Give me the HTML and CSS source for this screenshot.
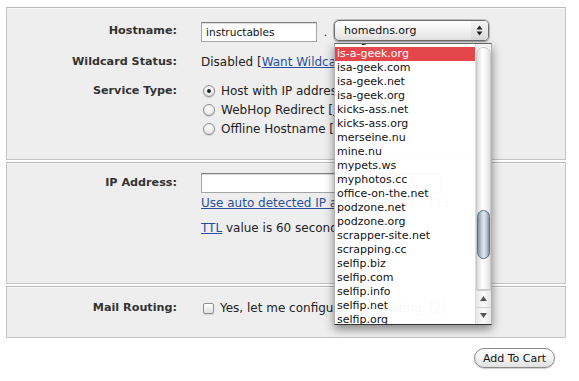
FILE: index.html
```html
<!DOCTYPE html>
<html>
<head>
<meta charset="utf-8">
<link rel="stylesheet" href="styles.css">
</head>
<body>
<div class="page">
  <div class="panel">
    <section class="sec sec-host">
      <div class="row row-host">
        <div class="label">Hostname:</div>
        <div class="host-field">
          <input class="txt txt-host" type="text" value="instructables">
          <span class="dot">.</span>
          <div class="popup-wrap">
            <div class="popup">
              <span class="popup-text">homedns.org</span>
              <span class="popup-arrows">
                <svg width="7" height="11" viewBox="0 0 7 11"><path d="M3.5 0.5 L6.5 4.5 L0.5 4.5 Z M3.5 10.5 L6.5 6.5 L0.5 6.5 Z" fill="#222"/></svg>
              </span>
            </div>
            <div class="menu">
              <ul class="menu-list">
                <li>is-a-geek.net</li>
                <li class="hl">is-a-geek.org</li>
                <li>isa-geek.com</li>
                <li>isa-geek.net</li>
                <li>isa-geek.org</li>
                <li>kicks-ass.net</li>
                <li>kicks-ass.org</li>
                <li>merseine.nu</li>
                <li>mine.nu</li>
                <li>mypets.ws</li>
                <li>myphotos.cc</li>
                <li>office-on-the.net</li>
                <li>podzone.net</li>
                <li>podzone.org</li>
                <li>scrapper-site.net</li>
                <li>scrapping.cc</li>
                <li>selfip.biz</li>
                <li>selfip.com</li>
                <li>selfip.info</li>
                <li>selfip.net</li>
                <li>selfip.org</li>
                <li>selfip.us</li>
              </ul>
              <div class="sbar">
                <div class="strack"><div class="sthumb"></div></div>
                <div class="sarrow sarrow-up"><svg width="7" height="5" viewBox="0 0 7 5"><path d="M3.5 0 L7 5 L0 5 Z" fill="#555"/></svg></div>
                <div class="sarrow"><svg width="7" height="5" viewBox="0 0 7 5"><path d="M0 0 L7 0 L3.5 5 Z" fill="#555"/></svg></div>
              </div>
            </div>
          </div>
        </div>
      </div>
      <div class="row row-line">
        <div class="label">Wildcard Status:</div>
        <div class="value">Disabled [<a href="#">Want Wildcard Support?</a>]</div>
      </div>
      <div class="row row-service">
        <div class="label">Service Type:</div>
        <div class="choices">
          <div class="choice"><span class="radio on"></span>Host with IP address</div>
          <div class="choice"><span class="radio"></span>WebHop Redirect [<a href="#">?</a>]</div>
          <div class="choice"><span class="radio"></span>Offline Hostname [<a href="#">?</a>]</div>
        </div>
      </div>
    </section>
    <section class="sec sec-ip">
      <div class="row row-ip">
        <div class="label">IP Address:</div>
        <div class="stack">
          <input class="txt txt-ip" type="text" value="">
          <div class="auto"><a href="#">Use auto detected IP address</a> 75.172.143</div>
          <div class="ttl"><a href="#">TTL</a> value is 60 seconds. [<a href="#">Edit TTL</a>]</div>
        </div>
      </div>
    </section>
    <section class="sec sec-mail">
      <div class="row row-line">
        <div class="label">Mail Routing:</div>
        <div class="value check-line"><span class="check"></span>Yes, let me configure mail routing. [<a href="#">?</a>]</div>
      </div>
    </section>
  </div>
  <div class="actions">
    <button class="btn" type="button">Add To Cart</button>
  </div>
</div>
</body>
</html>
```

FILE: styles.css
```css
* { box-sizing: border-box; }
html, body { margin: 0; background: #fff; }
body {
  font-family: "DejaVu Sans", sans-serif;
  font-size: 11px;
  color: #222;
  width: 579px;
  height: 381px;
  overflow: hidden;
}
a { color: #2a4f9f; text-decoration: underline; }

.page { padding: 7px 0 0 6px; }
.panel { width: 560px; display: flex; flex-direction: column; gap: 2px; }

.sec {
  border: 1px solid #c3c3c3;
  border-top-color: #b8b8b8;
  background: #eeeeee;
  box-shadow: inset 0 1px 0 #f8f8f8;
}
.sec-host { height: 153px; padding-top: 12px; }
.sec-ip { height: 122px; padding-top: 10px; }
.sec-mail { height: 52px; padding-top: 14px; }

.row {
  display: grid;
  grid-template-columns: 170px 1fr;
  column-gap: 24px;
  align-items: center;
}
.label {
  text-align: right;
  font-weight: bold;
  font-size: 11.2px;
  color: #333;
  line-height: 14px;
}
.row-line { line-height: 14px; margin-top: 13px; }
.sec-mail .row-line { margin-top: 0; }
.value { white-space: nowrap; font-size: 12px; }

.row-host { height: 22px; }
.host-field { display: flex; align-items: center; }
.txt {
  font-family: "DejaVu Sans", sans-serif;
  font-size: 10.6px;
  color: #111;
  height: 20px;
  border: 1px solid #a5a5a5;
  border-top-color: #7f7f7f;
  box-shadow: inset 0 1px 1px rgba(0,0,0,0.15);
  background: #fff;
  padding: 0 4px;
  margin: 0;
  outline: none;
}
.txt-host { width: 116px; margin-top: 1px; }
.dot { width: 17px; text-align: center; line-height: 14px; padding-top: 3px; }

.popup-wrap { position: relative; }
.popup {
  width: 155px;
  height: 21px;
  margin-top: -2px;
  border: 1px solid #6e6e6e;
  border-radius: 5px;
  background: linear-gradient(#ffffff, #f1f1f1 50%, #e4e4e4);
  box-shadow: 0 0 0 1px rgba(110,110,110,0.35), 0 1px 2px rgba(0,0,0,0.25);
  display: flex;
  align-items: center;
  justify-content: space-between;
  padding-left: 9px;
  color: #111;
}
.popup-arrows {
  width: 17px;
  height: 19px;
  display: flex;
  align-items: center;
  justify-content: center;
  background: linear-gradient(#f4f4f4, #dadada);
  border-radius: 0 4px 4px 0;
}
.popup-arrows svg { display: block; }

.menu {
  position: absolute;
  top: 21px;
  left: 0;
  width: 158px;
  height: 282px;
  background: rgba(255,255,255,0.965);
  border: 1px solid rgba(0,0,0,0.3);
  border-top-color: #666;
  border-bottom-color: #333;
  box-shadow: 0 4px 9px rgba(0,0,0,0.45);
  overflow: hidden;
  z-index: 5;
}
.menu-list {
  list-style: none;
  margin: -11px 0 0 0;
  padding: 0;
  width: 141px;
}
.menu-list li {
  line-height: 14px;
  height: 14px;
  padding-left: 2px;
  color: #111;
  white-space: nowrap;
}
.menu-list li.hl { background: #e4474b; color: #fff; }

.sbar {
  position: absolute;
  top: 0;
  right: 0;
  bottom: 0;
  width: 16px;
  display: flex;
  flex-direction: column;
  background: #f3f3f3;
  border-left: 1px solid #dcdcdc;
}
.strack {
  flex: 1;
  margin: 3px 0 0 0;
  border: 1px solid #c9c9c9;
  border-radius: 7px 7px 0 0;
  background: linear-gradient(90deg, #d9d9d9, #ffffff 40%, #f4f4f4 70%, #dedede);
  position: relative;
}
.sthumb {
  position: absolute;
  left: 0;
  right: 0;
  top: 162px;
  height: 49px;
  border-radius: 7px;
  border: 1px solid #5d6f83;
  background: linear-gradient(90deg, #7f93a8, #c7d3df 35%, #e3e9ef 55%, #a9b8c8 85%, #7d8fa3);
}
.sarrow {
  height: 17px;
  display: flex;
  align-items: center;
  justify-content: center;
  border-top: 1px solid #d0d0d0;
  background: linear-gradient(90deg, #e6e6e6, #fafafa 50%, #e6e6e6);
}
.sarrow svg { display: block; }

.row-service { margin-top: 12px; align-items: start; }
.row-service .label { line-height: 19px; }
.choices { display: flex; flex-direction: column; font-size: 12px; }
.choice { height: 19px; display: flex; align-items: center; white-space: nowrap; }
.radio {
  width: 12px;
  height: 12px;
  margin: 0 6px 0 2px;
  border-radius: 50%;
  border: 1px solid #8f8f8f;
  background: radial-gradient(circle at 50% 35%, #ffffff, #f0f0f0 50%, #cfcfcf);
  box-shadow: 0 1px 1px rgba(0,0,0,0.15);
  position: relative;
  flex: none;
}
.radio.on::after {
  content: "";
  position: absolute;
  left: 3px;
  top: 3px;
  width: 4px;
  height: 4px;
  border-radius: 50%;
  background: #222;
}

.row-ip { align-items: start; }
.row-ip .label { line-height: 20px; }
.stack { display: flex; flex-direction: column; font-size: 12px; }
.txt-ip { width: 240px; }
.auto { margin-top: 3px; line-height: 14px; white-space: nowrap; color: #888; }
.ttl { margin-top: 11px; line-height: 14px; white-space: nowrap; }

.check-line { display: flex; align-items: center; }
.check {
  width: 11px;
  height: 11px;
  margin: 1px 6px 0 2px;
  border: 1px solid #8f8f8f;
  border-radius: 2px;
  background: linear-gradient(#ffffff, #e2e2e2);
  box-shadow: 0 1px 1px rgba(0,0,0,0.12);
  flex: none;
}

.actions { width: 560px; display: flex; justify-content: flex-end; padding-right: 11px; margin-top: 10px; }
.btn {
  font-family: "DejaVu Sans", sans-serif;
  font-size: 11px;
  color: #111;
  width: 81px;
  height: 20px;
  padding: 0;
  border: 1px solid #8a8a8a;
  border-radius: 10px;
  background: linear-gradient(#ffffff, #f2f2f2 50%, #e1e1e1);
  box-shadow: 0 1px 1px rgba(0,0,0,0.2);
}
```
